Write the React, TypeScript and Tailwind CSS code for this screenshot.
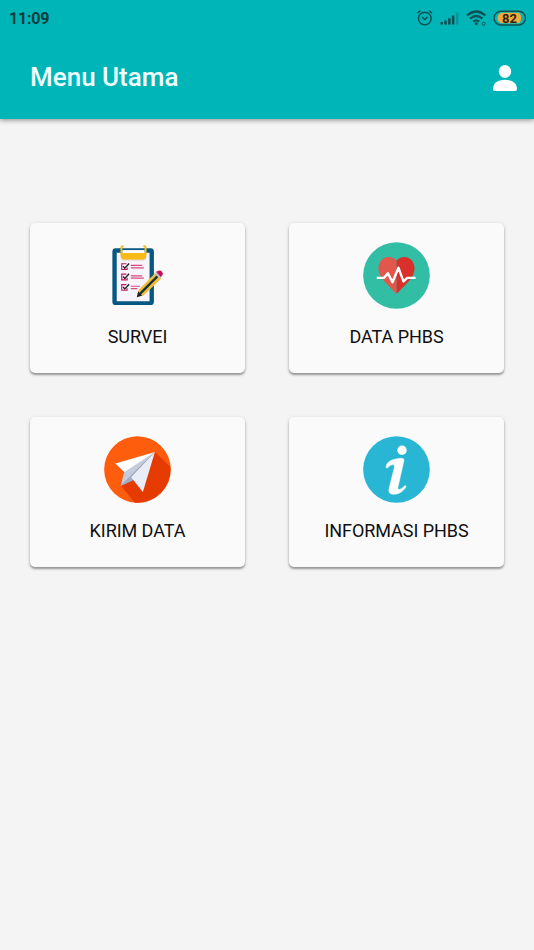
import React from "react"

const SurveyIcon = () => {
  return (
    <svg viewBox="12 21 200 200" className="size-[67px]">
      <rect x="37" y="40" width="124" height="169" rx="10" fill="#075783" />
      <path d="M50 53h98v145H50z" fill="#f7f5fb" />
      <path d="M60 55h78v14q0 8-9 8H71q-9 0-9-9z" fill="#e5d9d2" />
      <path d="M62 54h76v9q0 10-10 10H72q-10 0-10-10z" fill="#f9b916" />
      <path d="M64 57V38q0-4 4-4M136 57V38q0-4-4-4" fill="none" stroke="#f9b916" strokeWidth="6" strokeLinecap="round" />
      <path d="M67 49.500h66" stroke="#fbfafa" strokeWidth="9" />
      {[0, 31, 62].map((y) => (
        <g key={y} transform={`translate(0 ${y})`} fill="none">
          <path d="M79 86H65v17h16v-6" stroke="#c2185b" strokeWidth="3.5" />
          <path d="m69 93 5 6 13-14" stroke="#22202c" strokeWidth="4" />
          <path d={y === 62 ? "M92 91h27M92 98h20" : "M92 91h34M92 98h39"} stroke="#d54880" strokeWidth="3.5" />
        </g>
      ))}
      <path d="m110 185 5-21 51-51 17 17-53 51z" fill="#f4bd3a" />
      <path d="m120 175 52-52" stroke="#17323a" strokeWidth="7" />
      <path d="m163 115 6-6 16 16-6 6z" fill="#c3c8d4" />
      <path d="m169 110 5-2q7-3 11 3 4 5 0 10l-4 3z" fill="#c80e52" stroke="#c80e52" strokeWidth="2" />
      <path d="m110 186 4-17 12 12z" fill="#17202c" />
    </svg>
  )
}

const HeartIcon = () => {
  return (
    <svg viewBox="26 21 200 200" className="size-[67px]">
      <circle cx="126" cy="121" r="99.5" fill="#32bda5" />
      <path d="M126 77C115 62 89 62 78 79c-12 19-4 41 10 58l38 39z" fill="#e2574c" />
      <path d="M126 77c11-15 36-15 48 2 12 19 4 41-10 58l-38 39z" fill="#d9302c" />
      <path d="M67 128h22l11-14 14 27 18-43 15 41 11-11h25" fill="none" stroke="#fff" strokeWidth="7" strokeLinejoin="round" />
    </svg>
  )
}

const PlaneIcon = () => {
  return (
    <svg viewBox="26 18 200 200" className="size-[67px]">
      <circle cx="126" cy="118" r="99.5" fill="#ff5d0e" />
      <path d="M178 66l46 44a99.5 99.5 0 0 1-106 107.200L76 166z" fill="#e53b00" />
      <path d="M178 66 60 100l32 31z" fill="#fff" />
      <path d="M178 66 86 126l-10 41z" fill="#c3cbdc" />
      <path d="M178 66 76 167l42-20z" fill="#8f9bb7" />
      <path d="M178 66 107 137l-31 30 42-20z" fill="#a3adc6" />
      <path d="M178 66 107 141l35 44z" fill="#e9edf7" />
    </svg>
  )
}

const InfoIcon = () => {
  return (
    <svg viewBox="26 18 200 200" className="size-[67px]">
      <circle cx="126" cy="118" r="99.5" fill="#29b6d5" />
      <circle cx="142.500" cy="60.500" r="14" fill="#fff" />
      <path
        d="M95 110c1-12 12-20 29-23 11-2 26-6 24 5l-17 76c-2 9 0 11 5 9 6-2 10-6 14-10 4-2 6 1 3 5-9 13-21 20-33 20-15 0-19-6-16-18l15-60c2-9-1-12-7-10-5 1-8 5-12 8-3 3-5 2-5-2z"
        fill="#fff"
        stroke="#fff"
        strokeWidth="1.5"
      />
    </svg>
  )
}

const UserIcon = () => {
  return (
    <svg viewBox="0 0 24 26" className="h-[26px] w-6" fill="#fff">
      <ellipse cx="12" cy="6.500" rx="6.200" ry="6.500" />
      <path d="M0 24c0-5.500 4.500-9.200 12-9.200S24 18.500 24 24c0 1.300-.7 2-2 2H2c-1.300 0-2-.7-2-2z" />
    </svg>
  )
}

const StatusIcons = () => {
  return (
    <svg viewBox="0 0 112 20" className="h-5 w-28" fill="none" stroke="#104f52">
      <circle cx="9.800" cy="10.500" r="6.300" strokeWidth="1.500" />
      <path d="m2.500 5.200 3-2.700M17 5.200l-3-2.700M7 9l2.800 2.500L12.500 9" strokeWidth="1.500" />
      <g stroke="none" fill="#104f52">
        <path d="M25.500 14H28v2.500h-2.500zM29.300 12.500h2.500v4h-2.500zM33.100 10.300h2.500v6.200h-2.500zM36.900 7.500h2.500v9h-2.500z" />
        <path d="M41 4.500h2.500v12H41z" opacity=".3" />
      </g>
      <path d="M52 7.500q9.200-8 18.400 0M55 10.700q6.200-5.400 12.400 0M58.200 13.600q3-2.500 6 0" strokeWidth="2.200" />
      <circle cx="61.200" cy="15.700" r="1.500" fill="#104f52" stroke="none" />
      <circle cx="68.700" cy="15.700" r="1.500" strokeWidth=".9" />
      <rect x="79" y="3.200" width="31.500" height="13.800" rx="6.900" strokeWidth="1.500" />
      <path d="M86 4.800H103q3 0 3 5.200t-3 5.300H86q-3.500-1.500-3.500-5.200t3.500-5.300z" fill="#f0a83c" stroke="none" />
      <text x="94.500" y="14.500" textAnchor="middle" fill="#30230f" stroke="none" className="font-[Roboto] text-[13px] font-bold">
        82
      </text>
    </svg>
  )
}

const MenuCard = ({ label, children }: { label: string; children: React.ReactNode }) => {
  return (
    <button
      type="button"
      className="flex h-[150px] flex-col items-center rounded-[5px] bg-[#fafafa] pt-[19px] shadow-[0_2px_2px_rgba(0,0,0,0.32),0_1px_4px_rgba(0,0,0,0.14)]"
    >
      {children}
      <span className="mt-4 text-[18px] leading-6 tracking-[-0.05px] text-[#101010]">{label}</span>
    </button>
  )
}

const App = () => {
  return (
    <div className="min-h-[950px] w-full bg-[#f4f4f4] font-[Roboto,sans-serif]">
      <header className="h-[119px] bg-[#00b5b8] shadow-[0_1px_5px_rgba(0,0,0,0.45)]">
        <div className="flex h-9 items-center justify-between pr-[7px] pl-[9px]">
          <span className="pt-px text-[16px] font-bold tracking-[-0.2px] text-[#0b3d3f]">11:09</span>
          <StatusIcons />
        </div>
        <div className="flex h-[83px] items-center justify-between pr-[17px] pl-[30px]">
          <h1 className="text-[26px] font-medium text-[#effeff]">Menu Utama</h1>
          <UserIcon />
        </div>
      </header>

      <main className="grid grid-cols-2 gap-11 px-[30px] pt-[104px]">
        <MenuCard label="SURVEI">
          <SurveyIcon />
        </MenuCard>
        <MenuCard label="DATA PHBS">
          <HeartIcon />
        </MenuCard>
        <MenuCard label="KIRIM DATA">
          <PlaneIcon />
        </MenuCard>
        <MenuCard label="INFORMASI PHBS">
          <InfoIcon />
        </MenuCard>
      </main>
    </div>
  )
}

export default App
